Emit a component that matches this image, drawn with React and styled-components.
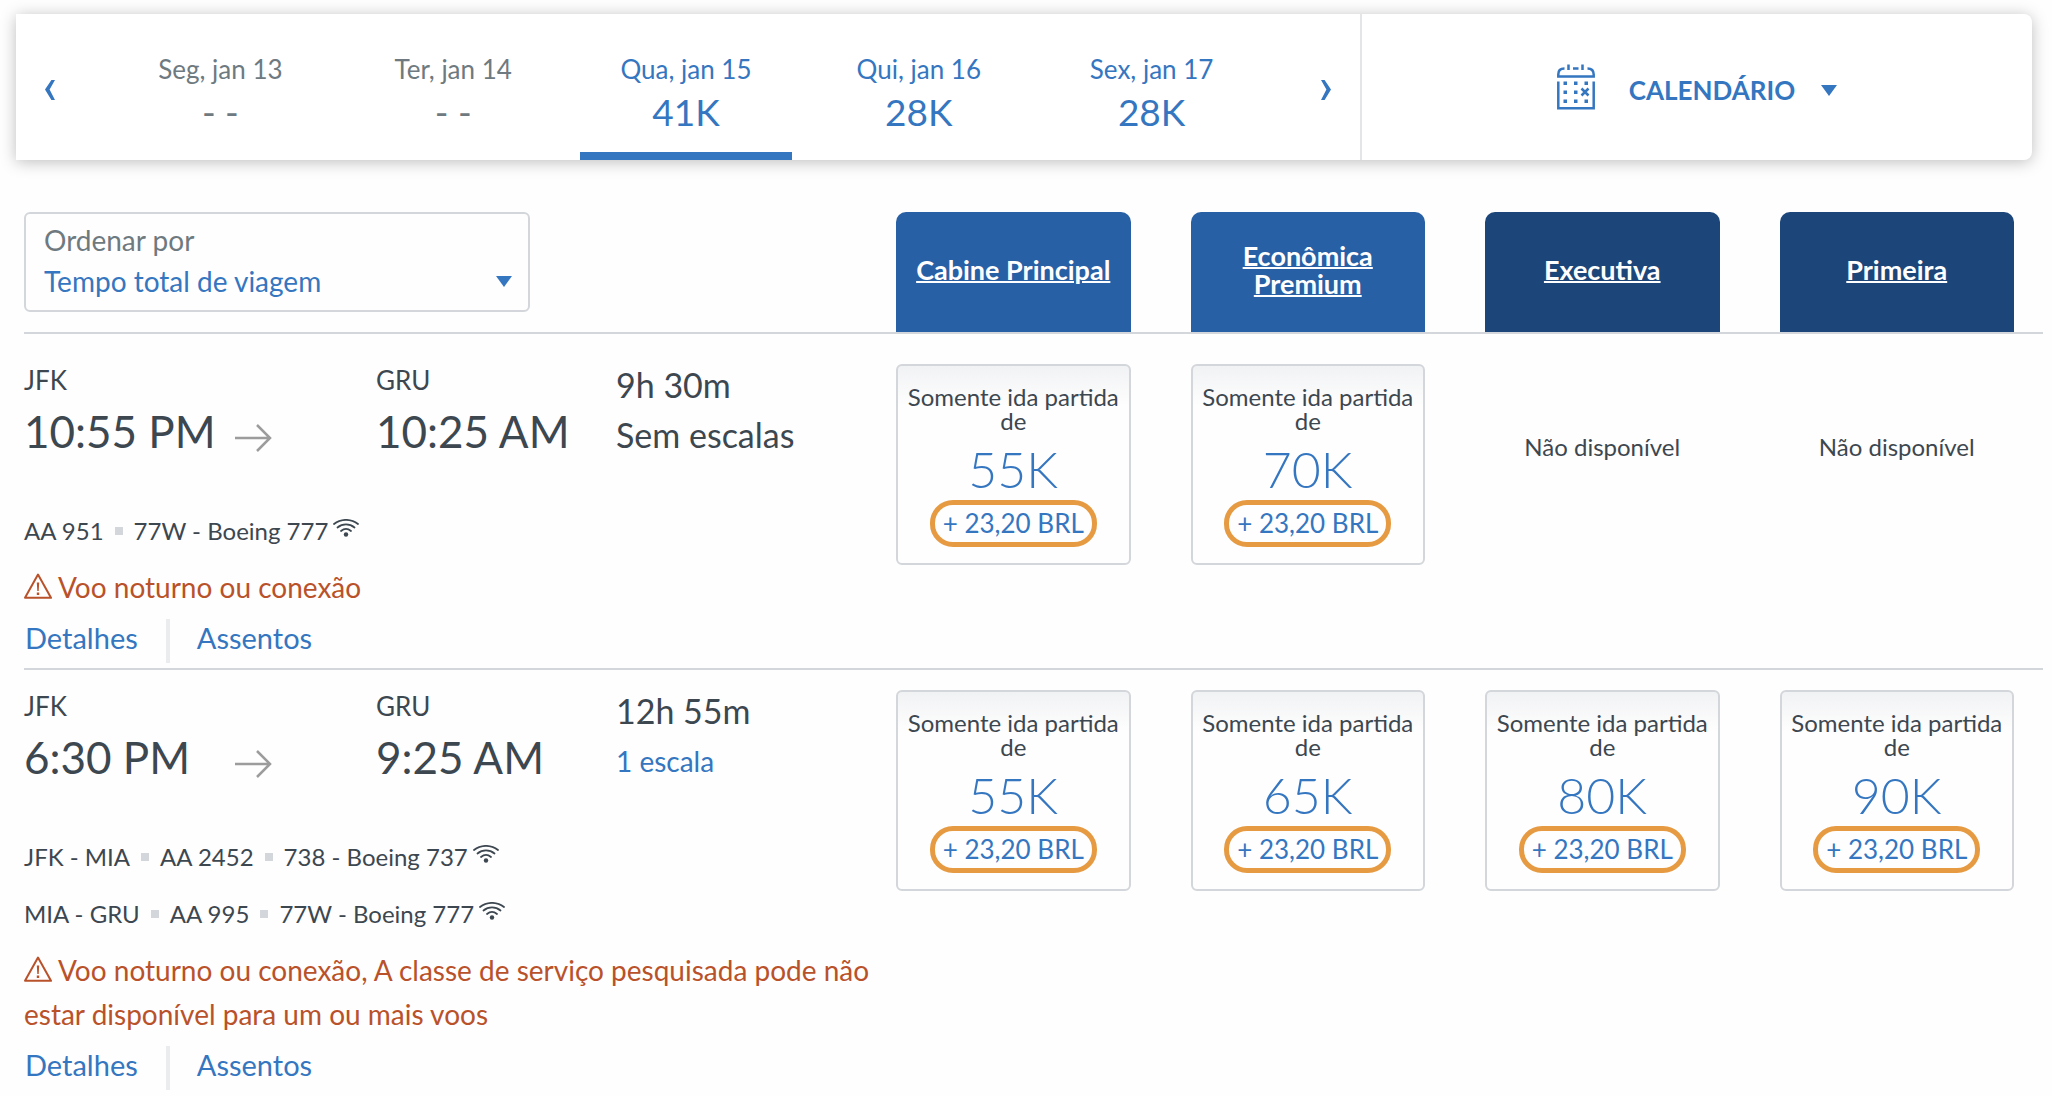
import React, { useState } from 'react';
import styled, { createGlobalStyle, ThemeProvider } from 'styled-components';

const theme = {
  blue: '#3576c0',
  text: '#3d4750',
  muted: '#6e7a80',
  line: '#d3d6da',
  warning: '#b9522a',
  highlight: '#e69b42',
  cabin: '#2860a5',
  cabinDark: '#1c467a',
};

const days = [
  { id: 13, label: 'Seg, jan 13', price: '- -', disabled: true },
  { id: 14, label: 'Ter, jan 14', price: '- -', disabled: true },
  { id: 15, label: 'Qua, jan 15', price: '41K' },
  { id: 16, label: 'Qui, jan 16', price: '28K' },
  { id: 17, label: 'Sex, jan 17', price: '28K' },
];

const cabins = [
  { name: 'Cabine Principal' },
  { name: 'Econômica Premium' },
  { name: 'Executiva', dark: true },
  { name: 'Primeira', dark: true },
];

const flights = [
  {
    id: 'aa951',
    from: 'JFK',
    departure: '10:55 PM',
    to: 'GRU',
    arrival: '10:25 AM',
    duration: '9h 30m',
    stops: 0,
    segments: [['AA 951', '77W - Boeing 777']],
    warning: 'Voo noturno ou conexão',
    fares: ['55K', '70K', null, null],
  },
  {
    id: 'aa2452',
    from: 'JFK',
    departure: '6:30 PM',
    to: 'GRU',
    arrival: '9:25 AM',
    duration: '12h 55m',
    stops: 1,
    segments: [
      ['JFK - MIA', 'AA 2452', '738 - Boeing 737'],
      ['MIA - GRU', 'AA 995', '77W - Boeing 777'],
    ],
    warning:
      'Voo noturno ou conexão, A classe de serviço pesquisada pode não estar disponível para um ou mais voos',
    fares: ['55K', '65K', '80K', '90K'],
  },
];

export default function App() {
  const [day, setDay] = useState(15);

  return (
    <ThemeProvider theme={theme}>
      <GlobalStyle />
      <DateBar>
        <DateNav>
          <ArrowButton aria-label="Dias anteriores">
            <Chevron />
          </ArrowButton>
          <Days>
            {days.map((d) => (
              <Day
                key={d.id}
                disabled={d.disabled}
                $active={d.id === day}
                onClick={() => setDay(d.id)}
              >
                <DayLabel>{d.label}</DayLabel>
                <DayPrice>{d.price}</DayPrice>
              </Day>
            ))}
          </Days>
          <ArrowButton aria-label="Próximos dias">
            <Chevron right />
          </ArrowButton>
        </DateNav>
        <CalendarButton>
          <CalendarIcon />
          CALENDÁRIO
          <Caret />
        </CalendarButton>
      </DateBar>

      <Results>
        <ResultsHeader>
          <SortBox>
            <SortLabel htmlFor="ordenar">Ordenar por</SortLabel>
            <SortField>
              <SortSelect id="ordenar">
                <option>Tempo total de viagem</option>
                <option>Partida</option>
                <option>Chegada</option>
              </SortSelect>
              <Caret />
            </SortField>
          </SortBox>
          <FareGrid>
            {cabins.map((c) => (
              <CabinTab key={c.name} $dark={c.dark}>
                <a href="#cabine">{c.name}</a>
              </CabinTab>
            ))}
          </FareGrid>
        </ResultsHeader>

        <FlightList>
          {flights.map((f) => (
            <Flight key={f.id} flight={f} />
          ))}
        </FlightList>
      </Results>
    </ThemeProvider>
  );
}

function Flight({ flight }) {
  return (
    <FlightRow>
      <div>
        <Times>
          <div>
            <Airport>{flight.from}</Airport>
            <Time>{flight.departure}</Time>
          </div>
          <RouteArrow />
          <div>
            <Airport>{flight.to}</Airport>
            <Time>{flight.arrival}</Time>
          </div>
          <Duration>
            <span>{flight.duration}</span>
            {flight.stops === 0 ? (
              <span>Sem escalas</span>
            ) : (
              <StopsLink href="#escalas">{flight.stops} escala</StopsLink>
            )}
          </Duration>
        </Times>

        {flight.segments.map((parts) => (
          <Segment key={parts.join()}>
            {parts.map((part, i) => (
              <React.Fragment key={part}>
                {i > 0 && <Dot />}
                <span>{part}</span>
              </React.Fragment>
            ))}
            <WifiIcon />
          </Segment>
        ))}

        <Warning>
          <WarningIcon />
          {flight.warning}
        </Warning>

        <Links>
          <a href="#detalhes">Detalhes</a>
          <a href="#assentos">Assentos</a>
        </Links>
      </div>

      <FareGrid>
        {flight.fares.map((price, i) =>
          price ? (
            <FareCard key={i}>
              <FareText>Somente ida partida de</FareText>
              <FarePrice>{price}</FarePrice>
              <Taxes>+ 23,20 BRL</Taxes>
            </FareCard>
          ) : (
            <Unavailable key={i}>Não disponível</Unavailable>
          )
        )}
      </FareGrid>
    </FlightRow>
  );
}

// --- Íconos ---
const Chevron = ({ right }) => (
  <svg width="12" height="20" viewBox="0 0 12 20" fill="currentColor" aria-hidden="true">
    {right ? (
      <path d="M1 0h3.600L11 9.600 4.600 20H1l5.400-10.400z" />
    ) : (
      <path d="M11 0H7.400L1 9.600 7.400 20H11L5.600 9.600z" />
    )}
  </svg>
);

const CalendarIcon = () => (
  <svg width="38" height="46" viewBox="0 0 38 46" aria-hidden="true">
    <g fill="none" stroke="currentColor" strokeWidth="2.500">
      <path d="M7.500 4.500C3 4.500 1.300 6.500 1.300 10.500V12.500H36.700V10.500C36.700 6.500 35 4.500 30.500 4.500" />
      <path d="M11.500 0.500V6M25.500 0.500V6M16 4.500H21.500" />
      <path d="M1.300 17.500V44.300H36.700V17.500" />
      <path d="M24.500 24.500L31.500 31.500M31.500 24.500L24.500 31.500" />
    </g>
    <g fill="currentColor">
      <path d="M6.500 17.500h3.500v3.500h-3.500zM17 17.500h3.500v3.500H17zM27.500 17.500H31v3.500h-3.500z" />
      <path d="M6.500 26.500h3.500V30h-3.500zM17 26.500h3.500V30H17z" />
      <path d="M6.500 35.500h3.500V39h-3.500zM17 35.500h3.500V39H17zM27.500 35.500H31V39h-3.500z" />
    </g>
  </svg>
);

const Caret = () => (
  <svg width="16" height="11" viewBox="0 0 16 11" fill="currentColor" aria-hidden="true">
    <path d="M0 0h16L8 11z" />
  </svg>
);

const WifiIcon = () => (
  <svg width="26" height="18" viewBox="0 0 26 18" aria-hidden="true">
    <g fill="none" stroke="currentColor" strokeWidth="1.800" strokeLinecap="round">
      <path d="M1 5C8-0.500 18-0.500 25 5" />
      <path d="M4.500 8.500C9.500 4.400 16.500 4.400 21.500 8.500" />
      <path d="M8 12C11 9.500 15 9.500 18 12" />
    </g>
    <circle cx="13" cy="15.500" r="2.200" fill="currentColor" />
  </svg>
);

const WarningIcon = () => (
  <svg width="28" height="26" viewBox="0 0 28 26" aria-hidden="true">
    <path
      d="M14 1.500L27 24.800H1z"
      fill="none"
      stroke="currentColor"
      strokeWidth="2"
      strokeLinejoin="round"
    />
    <path d="M12.800 9.500h2.400l-.5 8.500h-1.400zM12.800 19.500h2.400v2.400h-2.400z" fill="currentColor" />
  </svg>
);

const RouteArrow = () => (
  <ArrowSvg width="38" height="28" viewBox="0 0 38 28" aria-hidden="true">
    <path d="M0 14H35M22 1L35 14L22 27" fill="none" stroke="#9c9c9c" strokeWidth="2.500" />
  </ArrowSvg>
);

// --- Estilos ---
const GlobalStyle = createGlobalStyle`
  * {
    box-sizing: border-box;
  }
  body {
    margin: 0;
    background: #fefefe;
    color: ${({ theme }) => theme.text};
    font-family: Lato, 'Open Sans', sans-serif;
    font-size: 26px;
  }
  button, select {
    font: inherit;
    color: inherit;
    background: none;
    border: 0;
    padding: 0;
    cursor: pointer;
  }
  a {
    color: ${({ theme }) => theme.blue};
    text-decoration: none;
  }
`;

const DateBar = styled.nav`
  display: grid;
  grid-template-columns: 2fr 1fr;
  margin: 14px 20px 0 16px;
  background: #fff;
  color: ${({ theme }) => theme.blue};
  border-radius: 0 8px 8px 0;
  box-shadow: 0 2px 16px rgba(0, 0, 0, 0.26);
`;

const DateNav = styled.div`
  display: flex;
`;

const ArrowButton = styled.button`
  display: flex;
  align-items: center;
  justify-content: center;
  width: 68px;
  padding-top: 6px;
`;

const Days = styled.div`
  flex: 1;
  display: grid;
  grid-template-columns: repeat(5, 1fr);
  gap: 20px;
  padding: 0 34px 0 30px;
`;

const Day = styled.button`
  display: flex;
  flex-direction: column;
  align-items: center;
  padding: 39px 0 13px;
  border-bottom: 8px solid ${({ theme, $active }) => ($active ? theme.blue : 'transparent')};
  &:disabled {
    color: ${({ theme }) => theme.muted};
    cursor: default;
  }
`;

const DayLabel = styled.span`
  line-height: 32px;
`;

const DayPrice = styled.span`
  font-size: 37px;
  line-height: 54px;
`;

const CalendarButton = styled.button`
  display: flex;
  align-items: center;
  justify-content: center;
  gap: 26px;
  padding-top: 6px;
  border-left: 2px solid #e3e5e7;
  font-weight: bold;
  svg:first-child {
    margin: 0 8px 6px 0;
  }
`;

const Results = styled.main`
  margin: 52px 9px 0 24px;
`;

const ResultsHeader = styled.div`
  display: grid;
  grid-template-columns: 872fr 1118fr;
  align-items: start;
  padding-right: 29px;
  border-bottom: 2px solid ${({ theme }) => theme.line};
`;

const FareGrid = styled.div`
  display: grid;
  grid-template-columns: repeat(4, 1fr);
  column-gap: 60px;
  align-items: start;
`;

const SortBox = styled.div`
  width: 58%;
  padding: 6px 16px 8px 18px;
  border: 2px solid ${({ theme }) => theme.line};
  border-radius: 6px;
  font-size: 28px;
`;

const SortLabel = styled.label`
  display: block;
  line-height: 40px;
  color: ${({ theme }) => theme.muted};
`;

const SortField = styled.div`
  display: flex;
  align-items: center;
  color: ${({ theme }) => theme.blue};
`;

const SortSelect = styled.select`
  flex: 1;
  appearance: none;
  height: 42px;
`;

const CabinTab = styled.div`
  display: flex;
  align-items: center;
  justify-content: center;
  height: 120px;
  padding: 0 16px 4px;
  border-radius: 10px 10px 0 0;
  background: ${({ theme, $dark }) => ($dark ? theme.cabinDark : theme.cabin)};
  font-size: 27px;
  font-weight: bold;
  line-height: 28px;
  text-align: center;
  a {
    color: #fff;
    text-decoration: underline;
    text-decoration-thickness: 2px;
  }
`;

const FlightList = styled.ul`
  list-style: none;
  margin: 0;
  padding: 10px 0 0;
`;

const FlightRow = styled.li`
  display: grid;
  grid-template-columns: 872fr 1118fr;
  padding: 20px 29px 5px 0;
  & + & {
    border-top: 2px solid ${({ theme }) => theme.line};
  }
  &:last-child {
    padding-bottom: 0;
  }
`;

const Times = styled.div`
  display: grid;
  grid-template-columns: 211fr 141fr 240fr 280fr;
  margin-bottom: 36px;
`;

const Airport = styled.div`
  line-height: 32px;
`;

const Time = styled.div`
  font-size: 44px;
  line-height: 70px;
  white-space: nowrap;
`;

const ArrowSvg = styled.svg`
  align-self: end;
  margin-bottom: 14px;
`;

const Duration = styled.div`
  display: flex;
  flex-direction: column;
  align-items: flex-start;
  gap: 8px;
  font-size: 34px;
  line-height: 42px;
`;

const StopsLink = styled.a`
  font-size: 28px;
`;

const Segment = styled.div`
  display: flex;
  align-items: center;
  gap: 11px;
  font-size: 24px;
  line-height: 57px;
  svg {
    margin: -6px 0 0 -6px;
  }
`;

const Dot = styled.span`
  width: 8px;
  height: 8px;
  background: ${({ theme }) => theme.line};
`;

const Warning = styled.p`
  margin: 6px 0 10px;
  font-size: 28px;
  line-height: 44px;
  color: ${({ theme }) => theme.warning};
  svg {
    margin-right: 6px;
    vertical-align: -1px;
  }
`;

const Links = styled.div`
  display: flex;
  font-size: 29px;
  line-height: 38px;
  a {
    padding: 0 28px 6px 1px;
  }
  a + a {
    padding-left: 27px;
    border-left: 4px solid #ebecee;
  }
`;

const FareCard = styled.button`
  display: flex;
  flex-direction: column;
  align-items: center;
  padding: 19px 6px 16px;
  border: 2px solid ${({ theme }) => theme.line};
  border-radius: 6px;
  background: linear-gradient(#f1f2f4, #fefefe 40px);
`;

const FareText = styled.span`
  font-size: 24px;
  line-height: 24px;
  color: ${({ theme }) => theme.text};
`;

const FarePrice = styled.span`
  margin-top: 5px;
  font-size: 50px;
  font-weight: 300;
  line-height: 62px;
  color: ${({ theme }) => theme.blue};
`;

const Taxes = styled.span`
  padding: 0 8px;
  border: 5px solid ${({ theme }) => theme.highlight};
  border-radius: 23px;
  line-height: 37px;
  white-space: nowrap;
  color: ${({ theme }) => theme.blue};
`;

const Unavailable = styled.div`
  font-size: 24px;
  line-height: 166px;
  text-align: center;
  white-space: nowrap;
`;
